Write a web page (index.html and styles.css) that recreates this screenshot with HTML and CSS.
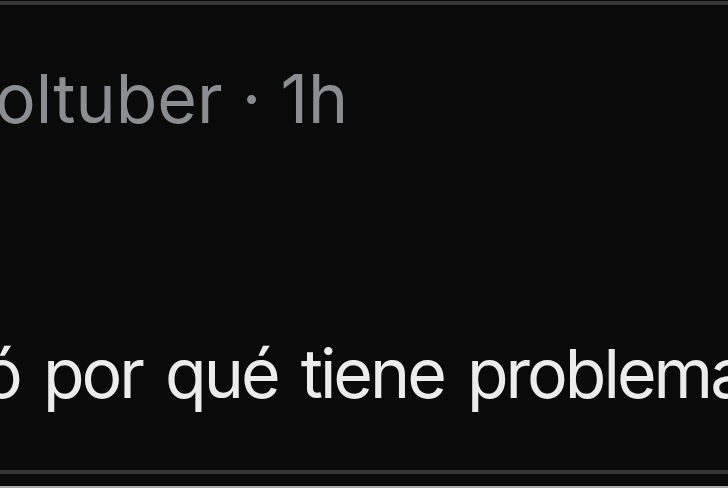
FILE: index.html
```html
<!DOCTYPE html>
<html lang="es">
<head>
<meta charset="utf-8">
<link rel="stylesheet" href="styles.css">
</head>
<body>
<div class="frame">
  <div class="post">
    <div class="meta"><span class="clip clip-meta">oltuber · 1h</span></div>
    <div class="body"><span class="clip clip-body">ó por qué tiene problemas</span></div>
  </div>
  <div class="footer"></div>
</div>
</body>
</html>
```
FILE: styles.css
```css
* { box-sizing: border-box; }
html, body { margin: 0; padding: 0; background: #0a0a0a; }
body {
  width: 728px;
  height: 488px;
  overflow: hidden;
  font-family: Inter, "Noto Sans", sans-serif;
}
.frame {
  display: flex;
  flex-direction: column;
  height: 488px;
  padding-top: 1px;
  border-bottom: 2px solid #a9a9a9;
}
.post {
  flex: 1;
  border-top: 4px solid #363636;
  border-bottom: 4px solid #363636;
  overflow: hidden;
  display: flex;
  flex-direction: column;
}
.meta, .body {
  white-space: nowrap;
  overflow: hidden;
  font-size: 68px;
  line-height: 80px;
}
.meta {
  color: #8a8d92;
  margin-top: 53px;
}
.body {
  color: #ececec;
  margin-top: 195px;
  letter-spacing: -3px;
  word-spacing: 7px;
}
.clip { display: inline-block; }
.clip-meta { margin-left: -5px; }
.clip-body { margin-left: -18px; }
.footer { height: 12px; }
```
